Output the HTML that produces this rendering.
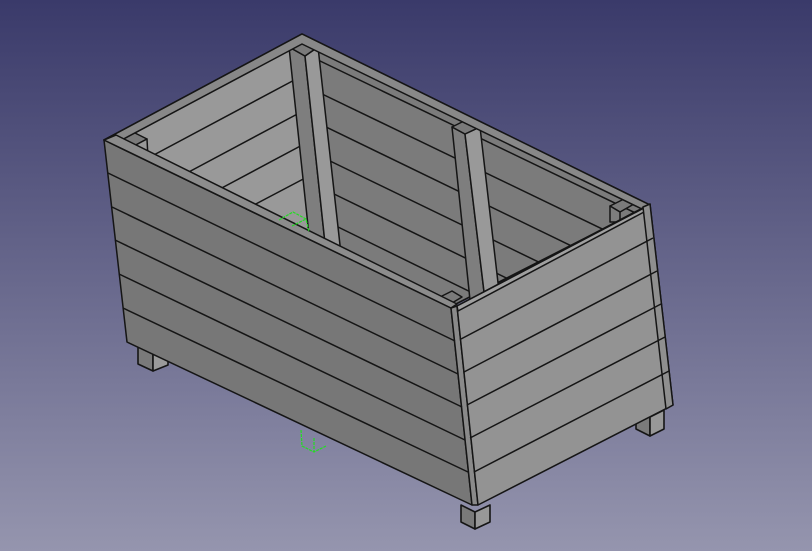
<!DOCTYPE html>
<html><head><meta charset="utf-8"><style>
html,body{margin:0;padding:0;width:812px;height:551px;overflow:hidden}
svg{display:block}
</style></head><body>
<svg width="812" height="551" viewBox="0 0 812 551" xmlns="http://www.w3.org/2000/svg">
<defs><linearGradient id="bg" x1="0" y1="0" x2="0" y2="1">
<stop offset="0" stop-color="#3a3a6a"/><stop offset="1" stop-color="#9595ae"/></linearGradient></defs>
<rect width="812" height="551" fill="url(#bg)"/>
<g stroke="#151515" stroke-width="1.6" stroke-linejoin="round">
<polygon points="138,345 153,352 153,371 138,364" fill="#7a7a7a"/>
<polygon points="153,352 168,358 168,365 153,371" fill="#9a9a9a"/>
<polygon points="636,410 650,417 650,436 636,429" fill="#7a7a7a"/>
<polygon points="650,417 664,410 664,429 650,436" fill="#989898"/>
<polygon points="461,505 475,512 475,529 461,522" fill="#7a7a7a"/>
<polygon points="475,512 490,505 490,522 475,529" fill="#989898"/>
<polygon points="104,140 302,34 650,205 452,306" fill="#7b7b7b"/>
<polygon points="116,143 300,44 332,280 250,209" fill="#999999"/>
</g>
<polygon points="338,252 450,300 450,306 338,258" fill="#6c6c9a"/>
<g stroke="#151515" stroke-width="1.5" fill="none">
<line x1="150" y1="157" x2="300" y2="77"/>
<line x1="185" y1="174" x2="303" y2="111"/>
<line x1="218" y1="190" x2="306" y2="143"/>
<line x1="252" y1="206" x2="309" y2="176"/>
<line x1="318" y1="60" x2="650" y2="220"/>
<line x1="320" y1="93" x2="650" y2="252"/>
<line x1="324" y1="126" x2="650" y2="284"/>
<line x1="328" y1="160" x2="650" y2="316"/>
<line x1="332" y1="193" x2="650" y2="348"/>
<line x1="336" y1="226" x2="650" y2="380"/>
</g>
<g stroke="#151515" stroke-width="1.5" stroke-linejoin="round">
<polygon points="289,47 305,56 327,262 311,254" fill="#7e7e7e"/>
<polygon points="305,56 318,47 341,254 327,262" fill="#999999"/>
<polygon points="289,47 303,38 318,47 305,56" fill="#7a7a7a"/>
<polygon points="452,127 465,134 485,300 470,300" fill="#7e7e7e"/>
<polygon points="465,134 480,127 500,300 485,300" fill="#999999"/>
<polygon points="452,127 466,120 480,127 465,134" fill="#7a7a7a"/>
<polygon points="118,140 133,132 147,139 132,147" fill="#7a7a7a"/>
<polygon points="132,147 147,139 148,158 133,160" fill="#999999"/>
<polygon points="610,206 624,199 634,204 620,212" fill="#7a7a7a"/>
<polygon points="610,206 620,212 620,222 610,222" fill="#7e7e7e"/>
<polygon points="440,297 452,291 462,297 452,303" fill="#7a7a7a"/>
<polygon points="104,140 302,34 650,205 644,210 302,44 116,143" fill="#888888"/>
<polygon points="104,140 451,308 472,505 127,342" fill="#777777"/>
<polygon points="104,140 116,135 457,304 451,308" fill="#8c8c8c"/>
<polygon points="451,308 457,306 478,505 472,505" fill="#8a8a8a"/>
<polygon points="457,306 650,204 673,405 478,505" fill="#939393"/>
<polygon points="457,306 644,208 644,212 458,311" fill="#a0a0a0"/>
<polygon points="643,207 650,204 673,405 666,409" fill="#8f8f8f"/>
</g>
<g stroke="#151515" stroke-width="1.5" fill="none">
<line x1="108" y1="173" x2="455" y2="341"/>
<line x1="112" y1="207" x2="458" y2="374"/>
<line x1="115" y1="240" x2="462" y2="407"/>
<line x1="119" y1="274" x2="465" y2="440"/>
<line x1="123" y1="308" x2="468" y2="472"/>
<line x1="461" y1="339" x2="653" y2="238"/>
<line x1="464" y1="372" x2="657" y2="271"/>
<line x1="467" y1="405" x2="661" y2="304"/>
<line x1="470" y1="438" x2="665" y2="337"/>
<line x1="474" y1="472" x2="669" y2="371"/>
</g>
<g stroke="#22dd22" stroke-width="1.2" fill="none" stroke-dasharray="3,1">
<polyline points="279,220 293,212 306,219 309,232"/>
<polyline points="292,226 306,219"/>
<polyline points="301,430 302,446 314,452 326,446"/>
<line x1="314" y1="438" x2="314" y2="452"/>
</g>
</svg>
</body></html>
